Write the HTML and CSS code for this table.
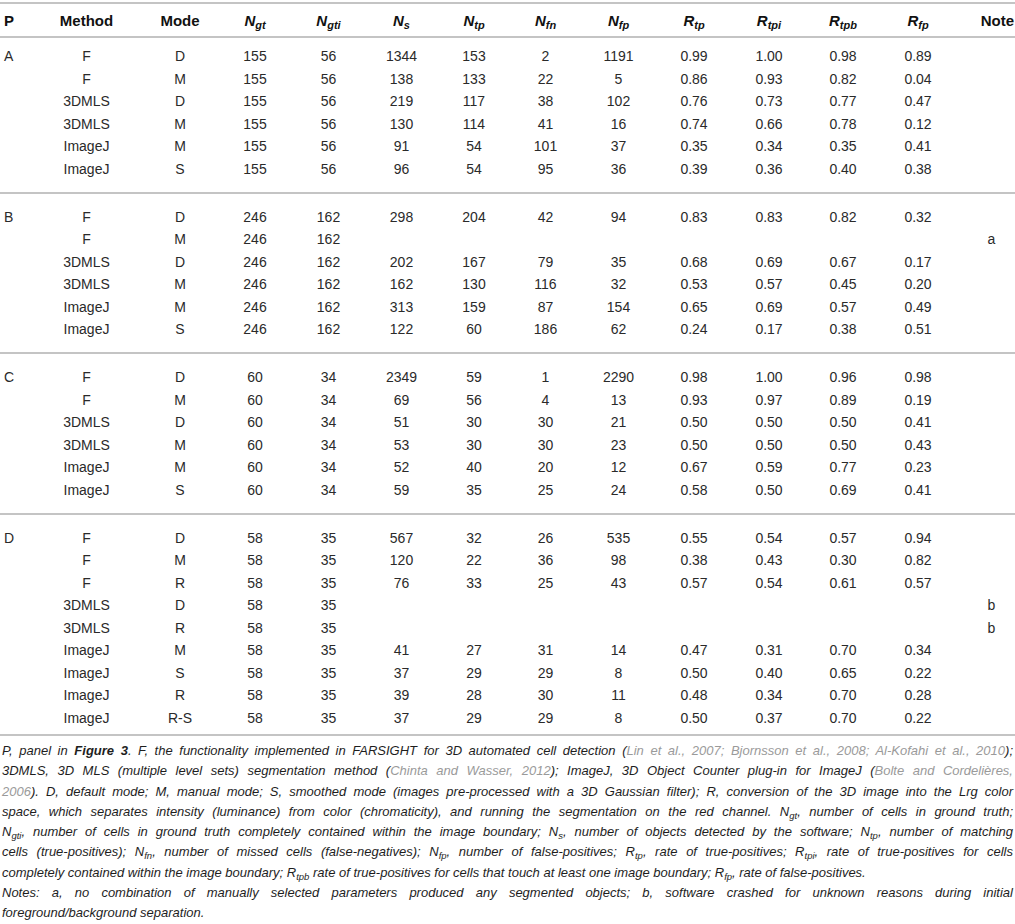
FILE: index.html
```html
<!DOCTYPE html>
<html lang="en">
  <head>
    <meta charset="UTF-8" />
    <meta name="viewport" content="width=device-width, initial-scale=1.0" />
    <title>Cell detection results</title>
    <link rel="stylesheet" href="styles.css">
  </head>
  <body>
    <table class="results">
      <colgroup>
        <col class="c-p" /><col class="c-method" /><col class="c-mode" />
        <col class="c-ngt" /><col class="c-ngti" /><col class="c-ns" />
        <col class="c-ntp" /><col class="c-nfn" /><col class="c-nfp" />
        <col class="c-rtp" /><col class="c-rtpi" /><col class="c-rtpb" />
        <col class="c-rfp" /><col class="c-note" />
      </colgroup>
      <thead>
        <tr>
          <th>P</th>
          <th>Method</th>
          <th>Mode</th>
          <th><i>N<sub>gt</sub></i></th>
          <th><i>N<sub>gti</sub></i></th>
          <th><i>N<sub>s</sub></i></th>
          <th><i>N<sub>tp</sub></i></th>
          <th><i>N<sub>fn</sub></i></th>
          <th><i>N<sub>fp</sub></i></th>
          <th><i>R<sub>tp</sub></i></th>
          <th><i>R<sub>tpi</sub></i></th>
          <th><i>R<sub>tpb</sub></i></th>
          <th><i>R<sub>fp</sub></i></th>
          <th>Note</th>
        </tr>
      </thead>
      <tbody>
        <tr><td>A</td><td>F</td><td>D</td><td>155</td><td>56</td><td>1344</td><td>153</td><td>2</td><td>1191</td><td>0.99</td><td>1.00</td><td>0.98</td><td>0.89</td><td></td></tr>
        <tr><td></td><td>F</td><td>M</td><td>155</td><td>56</td><td>138</td><td>133</td><td>22</td><td>5</td><td>0.86</td><td>0.93</td><td>0.82</td><td>0.04</td><td></td></tr>
        <tr><td></td><td>3DMLS</td><td>D</td><td>155</td><td>56</td><td>219</td><td>117</td><td>38</td><td>102</td><td>0.76</td><td>0.73</td><td>0.77</td><td>0.47</td><td></td></tr>
        <tr><td></td><td>3DMLS</td><td>M</td><td>155</td><td>56</td><td>130</td><td>114</td><td>41</td><td>16</td><td>0.74</td><td>0.66</td><td>0.78</td><td>0.12</td><td></td></tr>
        <tr><td></td><td>ImageJ</td><td>M</td><td>155</td><td>56</td><td>91</td><td>54</td><td>101</td><td>37</td><td>0.35</td><td>0.34</td><td>0.35</td><td>0.41</td><td></td></tr>
        <tr><td></td><td>ImageJ</td><td>S</td><td>155</td><td>56</td><td>96</td><td>54</td><td>95</td><td>36</td><td>0.39</td><td>0.36</td><td>0.40</td><td>0.38</td><td></td></tr>
      </tbody>
      <tbody>
        <tr><td>B</td><td>F</td><td>D</td><td>246</td><td>162</td><td>298</td><td>204</td><td>42</td><td>94</td><td>0.83</td><td>0.83</td><td>0.82</td><td>0.32</td><td></td></tr>
        <tr><td></td><td>F</td><td>M</td><td>246</td><td>162</td><td></td><td></td><td></td><td></td><td></td><td></td><td></td><td></td><td>a</td></tr>
        <tr><td></td><td>3DMLS</td><td>D</td><td>246</td><td>162</td><td>202</td><td>167</td><td>79</td><td>35</td><td>0.68</td><td>0.69</td><td>0.67</td><td>0.17</td><td></td></tr>
        <tr><td></td><td>3DMLS</td><td>M</td><td>246</td><td>162</td><td>162</td><td>130</td><td>116</td><td>32</td><td>0.53</td><td>0.57</td><td>0.45</td><td>0.20</td><td></td></tr>
        <tr><td></td><td>ImageJ</td><td>M</td><td>246</td><td>162</td><td>313</td><td>159</td><td>87</td><td>154</td><td>0.65</td><td>0.69</td><td>0.57</td><td>0.49</td><td></td></tr>
        <tr><td></td><td>ImageJ</td><td>S</td><td>246</td><td>162</td><td>122</td><td>60</td><td>186</td><td>62</td><td>0.24</td><td>0.17</td><td>0.38</td><td>0.51</td><td></td></tr>
      </tbody>
      <tbody>
        <tr><td>C</td><td>F</td><td>D</td><td>60</td><td>34</td><td>2349</td><td>59</td><td>1</td><td>2290</td><td>0.98</td><td>1.00</td><td>0.96</td><td>0.98</td><td></td></tr>
        <tr><td></td><td>F</td><td>M</td><td>60</td><td>34</td><td>69</td><td>56</td><td>4</td><td>13</td><td>0.93</td><td>0.97</td><td>0.89</td><td>0.19</td><td></td></tr>
        <tr><td></td><td>3DMLS</td><td>D</td><td>60</td><td>34</td><td>51</td><td>30</td><td>30</td><td>21</td><td>0.50</td><td>0.50</td><td>0.50</td><td>0.41</td><td></td></tr>
        <tr><td></td><td>3DMLS</td><td>M</td><td>60</td><td>34</td><td>53</td><td>30</td><td>30</td><td>23</td><td>0.50</td><td>0.50</td><td>0.50</td><td>0.43</td><td></td></tr>
        <tr><td></td><td>ImageJ</td><td>M</td><td>60</td><td>34</td><td>52</td><td>40</td><td>20</td><td>12</td><td>0.67</td><td>0.59</td><td>0.77</td><td>0.23</td><td></td></tr>
        <tr><td></td><td>ImageJ</td><td>S</td><td>60</td><td>34</td><td>59</td><td>35</td><td>25</td><td>24</td><td>0.58</td><td>0.50</td><td>0.69</td><td>0.41</td><td></td></tr>
      </tbody>
      <tbody>
        <tr><td>D</td><td>F</td><td>D</td><td>58</td><td>35</td><td>567</td><td>32</td><td>26</td><td>535</td><td>0.55</td><td>0.54</td><td>0.57</td><td>0.94</td><td></td></tr>
        <tr><td></td><td>F</td><td>M</td><td>58</td><td>35</td><td>120</td><td>22</td><td>36</td><td>98</td><td>0.38</td><td>0.43</td><td>0.30</td><td>0.82</td><td></td></tr>
        <tr><td></td><td>F</td><td>R</td><td>58</td><td>35</td><td>76</td><td>33</td><td>25</td><td>43</td><td>0.57</td><td>0.54</td><td>0.61</td><td>0.57</td><td></td></tr>
        <tr><td></td><td>3DMLS</td><td>D</td><td>58</td><td>35</td><td></td><td></td><td></td><td></td><td></td><td></td><td></td><td></td><td>b</td></tr>
        <tr><td></td><td>3DMLS</td><td>R</td><td>58</td><td>35</td><td></td><td></td><td></td><td></td><td></td><td></td><td></td><td></td><td>b</td></tr>
        <tr><td></td><td>ImageJ</td><td>M</td><td>58</td><td>35</td><td>41</td><td>27</td><td>31</td><td>14</td><td>0.47</td><td>0.31</td><td>0.70</td><td>0.34</td><td></td></tr>
        <tr><td></td><td>ImageJ</td><td>S</td><td>58</td><td>35</td><td>37</td><td>29</td><td>29</td><td>8</td><td>0.50</td><td>0.40</td><td>0.65</td><td>0.22</td><td></td></tr>
        <tr><td></td><td>ImageJ</td><td>R</td><td>58</td><td>35</td><td>39</td><td>28</td><td>30</td><td>11</td><td>0.48</td><td>0.34</td><td>0.70</td><td>0.28</td><td></td></tr>
        <tr><td></td><td>ImageJ</td><td>R-S</td><td>58</td><td>35</td><td>37</td><td>29</td><td>29</td><td>8</td><td>0.50</td><td>0.37</td><td>0.70</td><td>0.22</td><td></td></tr>
      </tbody>
    </table>

    <div class="caption">
      <p>
        <span class="line"><i>P</i>, panel in <b>Figure 3</b>. F, the functionality implemented in FARSIGHT for 3D automated cell detection (<span class="cite">Lin et al., 2007; Bjornsson et al., 2008; Al-Kofahi et al., 2010</span>);</span>
        <span class="line">3DMLS, 3D MLS (multiple level sets) segmentation method (<span class="cite">Chinta and Wasser, 2012</span>); ImageJ, 3D Object Counter plug-in for ImageJ (<span class="cite">Bolte and Cordelières,</span></span>
        <span class="line"><span class="cite">2006</span>). D, default mode; M, manual mode; S, smoothed mode (images pre-processed with a 3D Gaussian filter); R, conversion of the 3D image into the Lrg color</span>
        <span class="line">space, which separates intensity (luminance) from color (chromaticity), and running the segmentation on the red channel. N<sub>gt</sub>, number of cells in ground truth;</span>
        <span class="line">N<sub>gti</sub>, number of cells in ground truth completely contained within the image boundary; N<sub>s</sub>, number of objects detected by the software; N<sub>tp</sub>, number of matching</span>
        <span class="line">cells (true-positives); N<sub>fn</sub>, number of missed cells (false-negatives); N<sub>fp</sub>, number of false-positives; R<sub>tp</sub>, rate of true-positives; R<sub>tpi</sub>, rate of true-positives for cells</span>
        <span class="line last">completely contained within the image boundary; R<sub>tpb</sub> rate of true-positives for cells that touch at least one image boundary; R<sub>fp</sub>, rate of false-positives.</span>
      </p>
      <p>
        <span class="line">Notes: a, no combination of manually selected parameters produced any segmented objects; b, software crashed for unknown reasons during initial</span>
        <span class="line last">foreground/background separation.</span>
      </p>
    </div>
  </body>
</html>
```

FILE: styles.css
```css
body {
  margin: 0;
  padding: 0;
  background-color: #fff;
  color: #222;
  font-family: "Liberation Sans", Arial, sans-serif;
}
.results {
  width: 1015px;
  margin-top: 2px;
  border-collapse: collapse;
  table-layout: fixed;
}
.c-p { width: 40px; }
.c-method { width: 93px; }
.c-mode { width: 85px; }
.c-ngt { width: 74px; }
.c-ngti { width: 73px; }
.c-ns { width: 73px; }
.c-ntp { width: 72px; }
.c-nfn { width: 71px; }
.c-nfp { width: 75px; }
.c-rtp { width: 76px; }
.c-rtpi { width: 74px; }
.c-rtpb { width: 74px; }
.c-rfp { width: 76px; }
.c-note { width: 59px; }
.results th {
  height: 32px;
  padding: 0;
  font-size: 15px;
  font-weight: bold;
  text-align: center;
  color: #111;
  border-top: 2px solid #c4c4c4;
  border-bottom: 2px solid #c4c4c4;
}
.results th sub {
  font-size: 11px;
  vertical-align: -3px;
  line-height: 0;
}
.results td {
  padding: 0;
  height: 22.5px;
  line-height: 22.5px;
  font-size: 14px;
  text-align: center;
  color: #2a2a2a;
}
.results th:first-child,
.results td:first-child {
  text-align: left;
  padding-left: 4px;
}
.results th:nth-child(3),
.results td:nth-child(3) {
  padding-left: 9px;
}
.results td:last-child {
  padding-left: 12px;
}
.results th:last-child {
  text-align: right;
  padding-right: 1px;
}
.results tbody {
  border-bottom: 2px solid #c4c4c4;
}
.results tbody tr:first-child td {
  padding-top: 12px;
}
.results tbody:first-of-type tr:first-child td {
  padding-top: 7px;
}
.results tbody tr:last-child td {
  padding-bottom: 11.5px;
}
.results tbody:last-of-type tr:last-child td {
  padding-bottom: 5px;
}
.caption {
  margin: 5px 2px 0 2px;
  font-size: 13px;
  font-style: italic;
  line-height: 20.25px;
  color: #1e1e1e;
}
.caption p {
  margin: 0;
}
.caption .line {
  display: block;
  text-align: justify;
  text-align-last: justify;
}
.caption .line.last {
  text-align-last: left;
}
.caption sub {
  font-size: 9.5px;
  vertical-align: -3px;
  line-height: 0;
}
.cite {
  color: #9a9a9a;
}
```
